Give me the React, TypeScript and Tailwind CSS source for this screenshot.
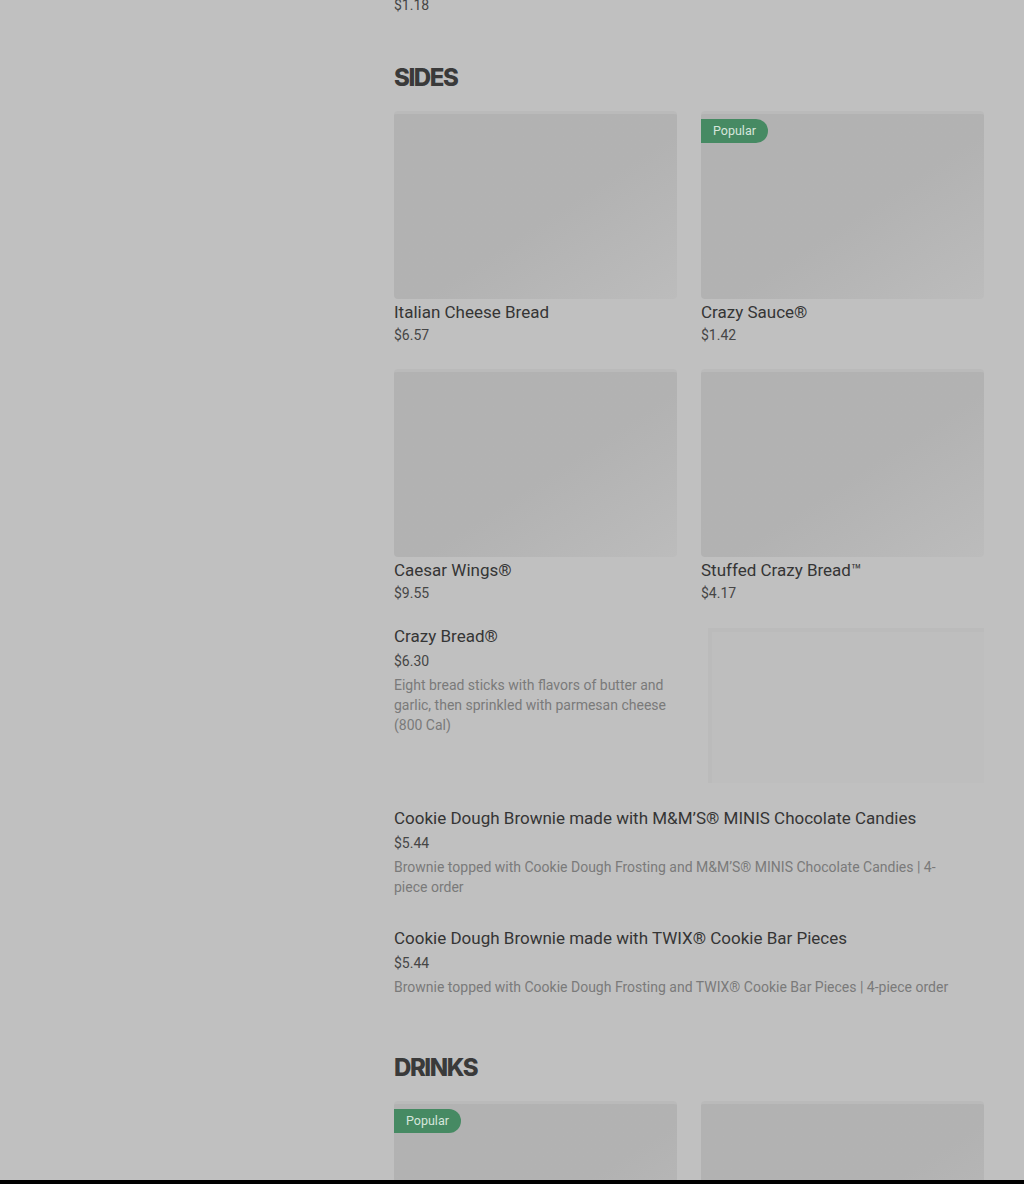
import React from "react";

interface MenuCard {
    name: string;
    price: string;
    popular?: boolean;
}

interface ListItem {
    name: string;
    price: string;
    description: string;
    image?: boolean;
}

const sides: MenuCard[] = [
    { name: "Italian Cheese Bread", price: "$6.57" },
    { name: "Crazy Sauce®", price: "$1.42", popular: true },
    { name: "Caesar Wings®", price: "$9.55" },
    { name: "Stuffed Crazy Bread™", price: "$4.17" },
];

const sideList: ListItem[] = [
    {
        name: "Crazy Bread®",
        price: "$6.30",
        description:
            "Eight bread sticks with flavors of butter and garlic, then sprinkled with parmesan cheese (800 Cal)",
        image: true,
    },
    {
        name: "Cookie Dough Brownie made with M&M’S® MINIS Chocolate Candies",
        price: "$5.44",
        description:
            "Brownie topped with Cookie Dough Frosting and M&M’S® MINIS Chocolate Candies | 4-piece order",
    },
    {
        name: "Cookie Dough Brownie made with TWIX® Cookie Bar Pieces",
        price: "$5.44",
        description:
            "Brownie topped with Cookie Dough Frosting and TWIX® Cookie Bar Pieces | 4-piece order",
    },
];

const drinks: MenuCard[] = [
    { name: "Pepsi®", price: "$2.99", popular: true },
    { name: "Diet Pepsi®", price: "$2.99" },
];

const Badge = () => (
    <span className="absolute left-0 top-[5px] h-6 pl-3 pr-3 flex items-center rounded-r-full bg-[#468a63] text-[12.5px] text-[#d6e6dc]">
        Popular
    </span>
);

const Card = ({ item }: { item: MenuCard }) => (
    <div className="flex flex-col">
        <div className="relative h-[188px] rounded-[4px] border-t-[3px] border-[#bababa] bg-linear-to-br from-[#b2b2b2] from-55% to-[#bcbcbc]">
            {item.popular && <Badge />}
        </div>
        <p className="mt-px text-[17px] leading-6 text-[#353535]">{item.name}</p>
        <p className="mt-px text-[14px] leading-5 text-[#464646]">{item.price}</p>
    </div>
);

const Heading = ({ children }: { children: React.ReactNode }) => (
    <h2 className="text-[24px] leading-8 font-extrabold tracking-[-0.06em] text-[#3a3a3a] font-['Inter',sans-serif]">
        {children}
    </h2>
);

const App = () => {
    return (
        <div className="h-[1184px] w-full flex flex-col bg-[#c0c0c0] font-['Roboto',sans-serif]">
            <div className="flex-1 flex overflow-hidden">
                <aside className="w-[394px] shrink-0" />
                <main className="w-[590px] flex flex-col">
                    <p className="mt-[-5px] text-[14px] leading-5 text-[#464646]">$1.18</p>

                    <section className="mt-[47px]">
                        <Heading>SIDES</Heading>
                        <div className="mt-[17px] grid grid-cols-2 gap-x-6 gap-y-6">
                            {sides.map((s) => (
                                <Card key={s.name} item={s} />
                            ))}
                        </div>

                        <ul className="mt-[21px] flex flex-col">
                            {sideList.map((item, i) => (
                                <li
                                    key={item.name}
                                    className={
                                        i === 0
                                            ? "flex gap-[31px]"
                                            : i === 1
                                            ? "mt-[23px] pr-[20px]"
                                            : "mt-[29px] pr-[20px]"
                                    }
                                >
                                    <div className="flex-1">
                                        <p className="text-[17px] leading-6 text-[#353535]">
                                            {item.name}
                                        </p>
                                        <p className="mt-[3px] text-[14px] leading-5 text-[#464646]">
                                            {item.price}
                                        </p>
                                        <p className="mt-[4px] text-[14px] leading-5 text-[#7a7a7a]">
                                            {item.description}
                                        </p>
                                    </div>
                                    {item.image && (
                                        <div className="mt-1 w-[276px] h-[155px] shrink-0 border-t-[4px] border-l-[4px] border-[#bbbbbb] bg-[#bebebe]" />
                                    )}
                                </li>
                            ))}
                        </ul>
                    </section>

                    <section className="mt-[55px]">
                        <Heading>DRINKS</Heading>
                        <div className="mt-[17px] grid grid-cols-2 gap-x-6 gap-y-6">
                            {drinks.map((d) => (
                                <Card key={d.name} item={d} />
                            ))}
                        </div>
                    </section>
                </main>
            </div>
            <div className="h-1 bg-black" />
        </div>
    );
};

export default App;
